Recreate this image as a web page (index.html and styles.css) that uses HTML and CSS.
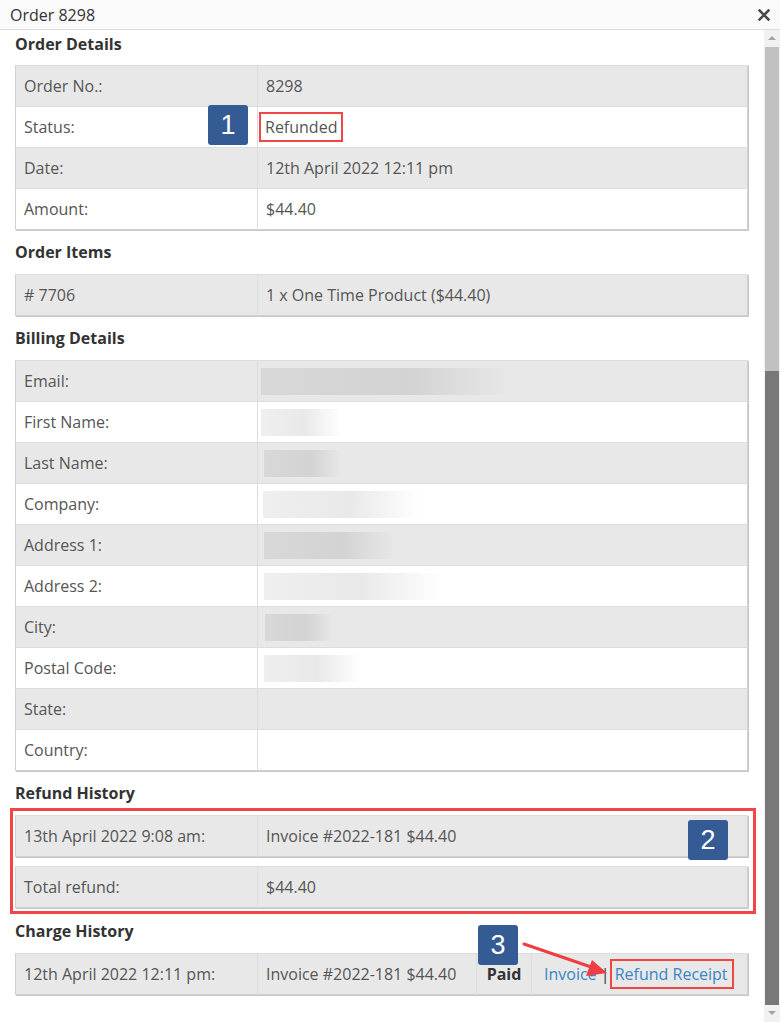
FILE: index.html
```html
<!DOCTYPE html>
<html>
<head>
  <title>Order 8298</title>
  <link rel="stylesheet" href="styles.css">
</head>
<body>
<div class="modal">
  <!-- Title bar -->
  <div class="modal-title">
    <span>Order 8298</span>
    <svg class="close-icon" width="12" height="12" viewBox="0 0 12 12">
      <path d="M1.5 1.5 L10.5 10.5 M10.5 1.5 L1.5 10.5" stroke="#4a4a4a" stroke-width="2.6" stroke-linecap="square"/>
    </svg>
  </div>

  <div class="modal-body">
    <div class="content">

      <!-- Order details -->
      <h3 class="section-title first">Order Details</h3>
      <table class="info-table">
        <tr><td class="label">Order No.:</td><td>8298</td></tr>
        <tr><td class="label">Status:</td><td><span class="mark-box">Refunded</span></td></tr>
        <tr><td class="label">Date:</td><td>12th April 2022 12:11 pm</td></tr>
        <tr><td class="label">Amount:</td><td>$44.40</td></tr>
      </table>

      <!-- Order items -->
      <h3 class="section-title">Order Items</h3>
      <table class="info-table">
        <tr><td class="label"># 7706</td><td>1 x One Time Product ($44.40)</td></tr>
      </table>

      <!-- Billing details (values blurred) -->
      <h3 class="section-title">Billing Details</h3>
      <table class="info-table">
        <tr><td class="label">Email:</td><td class="blur-cell"><div class="blur dark w-email"></div></td></tr>
        <tr><td class="label">First Name:</td><td class="blur-cell"><div class="blur light w-first"></div></td></tr>
        <tr><td class="label">Last Name:</td><td class="blur-cell"><div class="blur dark w-last"></div></td></tr>
        <tr><td class="label">Company:</td><td class="blur-cell"><div class="blur light w-company"></div></td></tr>
        <tr><td class="label">Address 1:</td><td class="blur-cell"><div class="blur dark w-addr1"></div></td></tr>
        <tr><td class="label">Address 2:</td><td class="blur-cell"><div class="blur light w-addr2"></div></td></tr>
        <tr><td class="label">City:</td><td class="blur-cell"><div class="blur dark w-city"></div></td></tr>
        <tr><td class="label">Postal Code:</td><td class="blur-cell"><div class="blur light w-postal"></div></td></tr>
        <tr><td class="label">State:</td><td></td></tr>
        <tr><td class="label">Country:</td><td></td></tr>
      </table>

      <!-- Refund history -->
      <h3 class="section-title refund-title">Refund History</h3>
      <div class="refund-box">
        <table class="info-table">
          <tr><td class="label">13th April 2022 9:08 am:</td><td>Invoice #2022-181 $44.40</td></tr>
        </table>
        <table class="info-table">
          <tr><td class="label">Total refund:</td><td>$44.40</td></tr>
        </table>
      </div>

      <!-- Charge history -->
      <h3 class="section-title charge-title">Charge History</h3>
      <table class="info-table">
        <tr>
          <td class="label">12th April 2022 12:11 pm:</td>
          <td class="charge-desc">Invoice #2022-181 $44.40</td>
          <td class="charge-status">Paid</td>
          <td class="charge-links"><a href="#">Invoice</a> | <span class="mark-box link-box"><a href="#">Refund Receipt</a></span></td>
        </tr>
      </table>

      <!-- Annotation badges -->
      <div class="badge badge-1">1</div>
      <div class="badge badge-2">2</div>
      <div class="badge badge-3">3</div>
      <svg class="arrow" width="100" height="40" viewBox="0 0 100 40">
        <line x1="3" y1="3" x2="73" y2="27" stroke="#ee3e42" stroke-width="3" stroke-linecap="round"/>
        <polygon points="86,32 65,35 71,19" fill="#ee3e42"/>
      </svg>
    </div>

    <!-- Scrollbar -->
    <div class="scrollbar">
      <div class="scroll-arrow up"></div>
      <div class="scroll-track">
        <div class="scroll-upper"></div>
        <div class="scroll-thumb"></div>
      </div>
      <div class="scroll-arrow down"></div>
    </div>
  </div>
</div>
</body>
</html>
```

FILE: styles.css
```css
/* Order modal */
body {
  margin: 0;
  font-family: "Open Sans", "Noto Sans", sans-serif;
  color: #555;
  background: #fff;
}

.modal-title {
  height: 29px;
  border-bottom: 1px solid #dcdcdc;
  background-color: #fafafa;
  display: flex;
  align-items: center;
  justify-content: space-between;
  padding: 0 10px 0 10px;
  font-size: 16px;
  color: #333;
}

.modal-body {
  display: flex;
  height: 992px;
}

.content {
  flex: 1;
  position: relative;
  padding: 0 16px 0 15px;
}

/* Section headings */
.section-title {
  margin: 0;
  padding-top: 11px;
  margin-bottom: 11px;
  font-size: 16px;
  line-height: 22px;
  color: #333;
  font-weight: bold;
}

.section-title.first {
  padding-top: 3px;
  margin-bottom: 10px;
}

.section-title.refund-title {
  margin-bottom: 4px;
}

.section-title.charge-title {
  padding-top: 6px;
}

/* Tables */
.info-table {
  width: 100%;
  border-collapse: collapse;
  border: 1px solid #d0d0d0;
  box-shadow: 1px 1px 0 #c8c8c8;
  font-size: 16px;
}

.info-table td {
  height: 41px;
  padding: 0 8px;
  border-top: 1px solid #dcdcdc;
  border-left: 1px solid #dcdcdc;
  box-sizing: border-box;
  line-height: 22px;
  vertical-align: middle;
}

.info-table tr:nth-child(odd) td {
  background-color: #e8e8e8;
}

.info-table tr:nth-child(even) td {
  background-color: #fff;
}

.info-table td.label {
  width: 242px;
  border-left: none;
}

/* Blurred placeholders */
.blur-cell {
  padding-left: 3px !important;
}

.blur {
  height: 27px;
}

.blur.dark {
  background: linear-gradient(to right, #d8d8d8 0%, #d3d3d3 60%, rgba(220, 220, 220, 0) 100%);
}

.blur.light {
  background: linear-gradient(to right, #efefef 0%, #e9e9e9 55%, rgba(240, 240, 240, 0) 100%);
}

.w-email { width: 248px; }
.w-first { width: 80px; }
.w-last { width: 78px; margin-left: 3px; }
.w-company { width: 158px; margin-left: 2px; }
.w-addr1 { width: 132px; margin-left: 3px; }
.w-addr2 { width: 177px; margin-left: 3px; }
.w-city { width: 68px; margin-left: 4px; }
.w-postal { width: 97px; margin-left: 3px; }

/* Refund history frame */
.refund-box {
  border: 3px solid #f24646;
  margin: 0 -8px 0 -5px;
  padding: 4px 5px 3px 2px;
}

.refund-box .info-table + .info-table {
  margin-top: 9px;
}

/* Charge history */
.info-table td.charge-desc {
  width: 219px;
}

.info-table td.charge-status {
  width: 55px;
  text-align: center;
  font-weight: bold;
  color: #333;
  padding: 0;
}

.info-table td.charge-links {
  padding: 0 0 0 12px;
  color: #333;
  white-space: nowrap;
}

.charge-links a {
  color: #3a85c8;
  text-decoration: none;
}

/* Red annotation boxes */
.mark-box {
  display: inline-block;
  border: 2px solid #f24646;
  padding: 2px 4px 2px 4px;
  margin-left: -7px;
  line-height: 22px;
}

.link-box {
  margin-left: -4px;
  padding: 2px 4px 2px 3px;
}

/* Numbered badges */
.badge {
  position: absolute;
  width: 40px;
  height: 40px;
  background-color: #345b94;
  border-radius: 3px;
  color: #fff;
  font-family: "Liberation Sans", Arial, sans-serif;
  font-size: 27px;
  line-height: 40px;
  text-align: center;
}

.badge-1 { left: 208px; top: 75px; }
.badge-2 { left: 688px; top: 790px; }
.badge-3 { left: 478px; top: 895px; }

.arrow {
  position: absolute;
  left: 521px;
  top: 911px;
}

/* Fake scrollbar */
.scrollbar {
  width: 16px;
  background-color: #f1f1f1;
  display: flex;
  flex-direction: column;
}

.scroll-arrow {
  height: 17px;
  position: relative;
}

.scroll-arrow.up::after,
.scroll-arrow.down::after {
  content: "";
  position: absolute;
  left: 4px;
  border-left: 4px solid transparent;
  border-right: 4px solid transparent;
}

.scroll-arrow.up::after {
  top: 6px;
  border-bottom: 4px solid #a3a3a3;
}

.scroll-arrow.down::after {
  top: 6px;
  border-top: 4px solid #a3a3a3;
}

.scroll-track {
  flex: 1;
  display: flex;
  flex-direction: column;
  padding: 0 1px 0 1px;
}

.scroll-upper {
  height: 324px;
  background-color: #c1c1c1;
}

.scroll-thumb {
  flex: 1;
  background-color: #787878;
}
```
